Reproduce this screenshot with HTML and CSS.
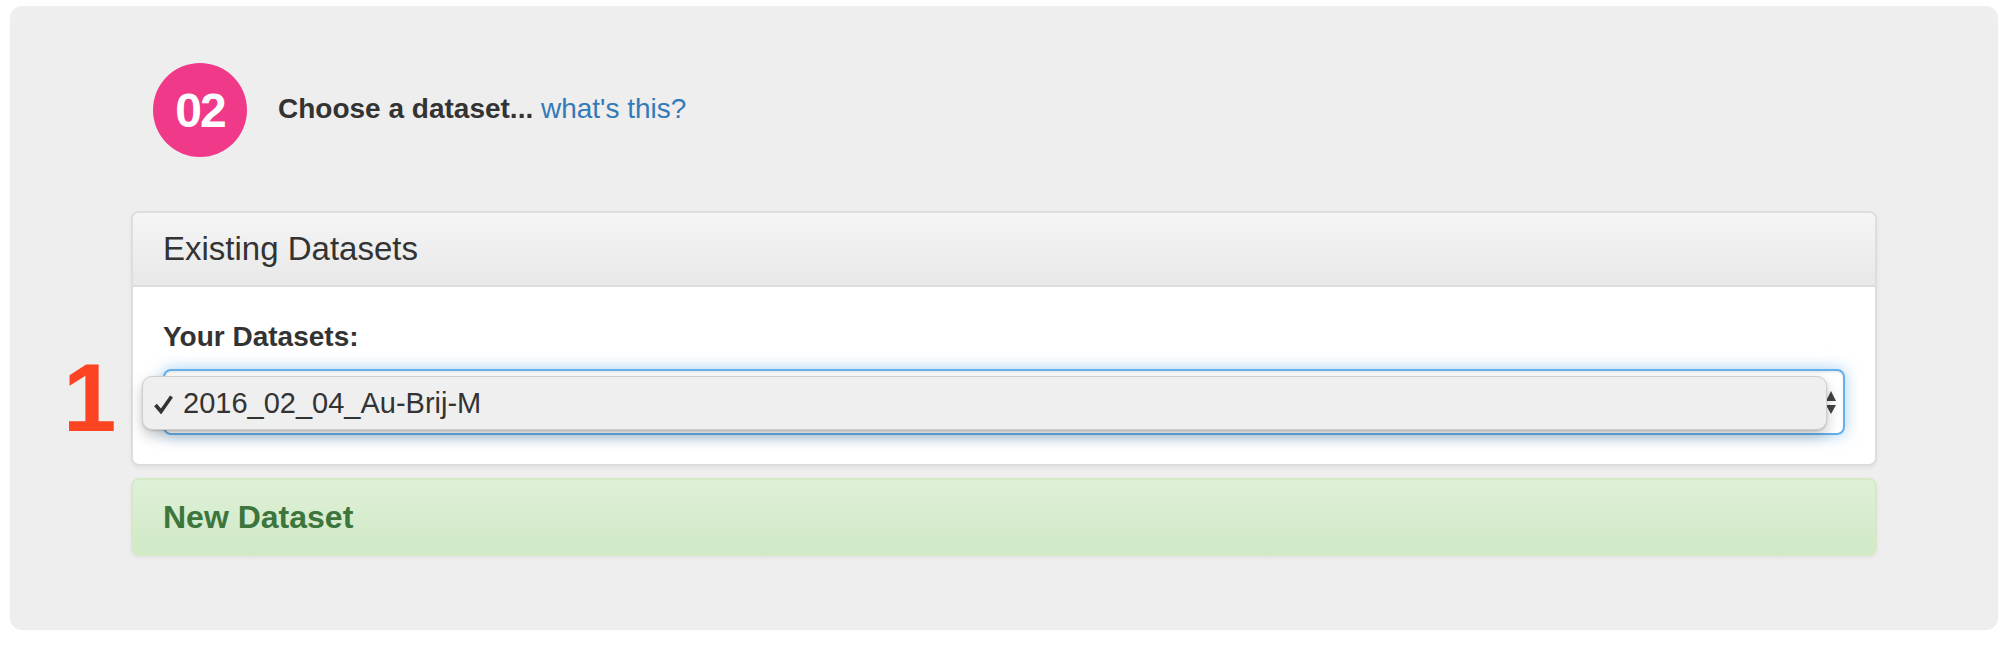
FILE: index.html
```html
<!DOCTYPE html>
<html>
<head>
<meta charset="utf-8">
<link rel="stylesheet" href="styles.css">
</head>
<body>
<div class="jumbo">
  <div class="step">
    <div class="badge">02</div>
    <div class="step-text"><strong>Choose a dataset...</strong> <a class="help" href="#">what's this?</a></div>
  </div>
  <div class="panel">
    <div class="panel-heading">Existing Datasets</div>
    <div class="panel-body">
      <div class="label">Your Datasets:</div>
      <div class="select-wrap">
        <span class="marker">1</span>
        <div class="select" role="listbox">
          <div class="spinner">
            <svg width="10" height="24" viewBox="0 0 10 24"><polygon points="5,0 10,10 0,10" fill="#444"/><polygon points="0,14 10,14 5,23" fill="#444"/></svg>
          </div>
        </div>
        <div class="menu">
          <svg class="check" width="21" height="20" viewBox="0 0 21 20"><polyline points="2.5,11 8,17.5 18.5,2.5" fill="none" stroke="#333" stroke-width="3.6" stroke-linejoin="miter" stroke-linecap="butt"/></svg>
          <span class="menu-text">2016_02_04_Au-Brij-M</span>
        </div>
      </div>
    </div>
  </div>
  <div class="panel-new">New Dataset</div>
</div>
</body>
</html>
```
FILE: styles.css
```css
* { box-sizing: border-box; }
html, body { margin: 0; padding: 0; background: #fff; }
body { font-family: "Liberation Sans", Arial, sans-serif; color: #333; }

.jumbo {
  margin: 6px 10px 24px 10px;
  height: 624px;
  background: #eeeeee;
  border-radius: 12px;
  padding: 57px 121px 74px 121px;
}

.step {
  display: flex;
  align-items: center;
  margin-left: 22px;
  margin-bottom: 54px;
  height: 94px;
}
.badge {
  width: 94px;
  height: 94px;
  border-radius: 50%;
  background: #f03989;
  color: #fff;
  font-weight: bold;
  font-size: 48px;
  display: flex;
  align-items: center;
  justify-content: center;
  letter-spacing: -2px;
}
.step-text {
  margin-left: 31px;
  font-size: 28px;
  line-height: 40px;
  margin-top: -2px;
  color: #333;
}
.help { color: #337ab7; text-decoration: none; }

.panel {
  background: #fff;
  border: 2px solid #dddddd;
  border-radius: 8px;
  box-shadow: 0 2px 4px rgba(0,0,0,0.05);
}
.panel-heading {
  background: linear-gradient(to bottom, #f5f5f5, #e8e8e8);
  border-bottom: 2px solid #dddddd;
  border-radius: 6px 6px 0 0;
  padding: 19px 30px;
  font-size: 33px;
  line-height: 34px;
  color: #333;
}
.panel-body {
  padding: 30px 30px 29px 30px;
}
.label {
  font-weight: bold;
  font-size: 28px;
  line-height: 40px;
  margin-bottom: 12px;
  color: #333;
}
.select-wrap { position: relative; }
.select {
  height: 66px;
  border: 2px solid #66afe9;
  border-radius: 8px;
  background: #fff;
  box-shadow: inset 0 2px 2px rgba(0,0,0,0.075), 0 0 16px rgba(102,175,233,0.6);
  display: flex;
  align-items: center;
  justify-content: flex-end;
  padding-right: 7px;
}
.spinner { display: flex; padding-top: 2px; }

.menu {
  position: absolute;
  left: -21px;
  top: 7px;
  width: 1685px;
  height: 54px;
  background: #efefef;
  border: 1px solid #cfcfcf;
  border-radius: 10px;
  box-shadow: 0 6px 14px rgba(0,0,0,0.22), 0 1px 2px rgba(0,0,0,0.15);
  display: flex;
  align-items: center;
  padding-left: 10px;
}
.check { margin-top: 1px; }
.menu-text {
  margin-left: 9px;
  font-size: 29px;
  color: #333;
  line-height: 34px;
}

.marker {
  position: absolute;
  left: -100px;
  top: -19px;
  font-size: 96px;
  font-weight: bold;
  color: #fc4422;
  line-height: 96px;
}

.panel-new {
  margin-top: 12px;
  border: 2px solid #d6e9c6;
  border-radius: 8px;
  background: linear-gradient(to bottom, #dff0d8, #d0e9c6);
  padding: 20px 30px;
  font-size: 32px;
  line-height: 34px;
  font-weight: bold;
  color: #3c763d;
  box-shadow: 0 2px 4px rgba(0,0,0,0.05);
}
```
